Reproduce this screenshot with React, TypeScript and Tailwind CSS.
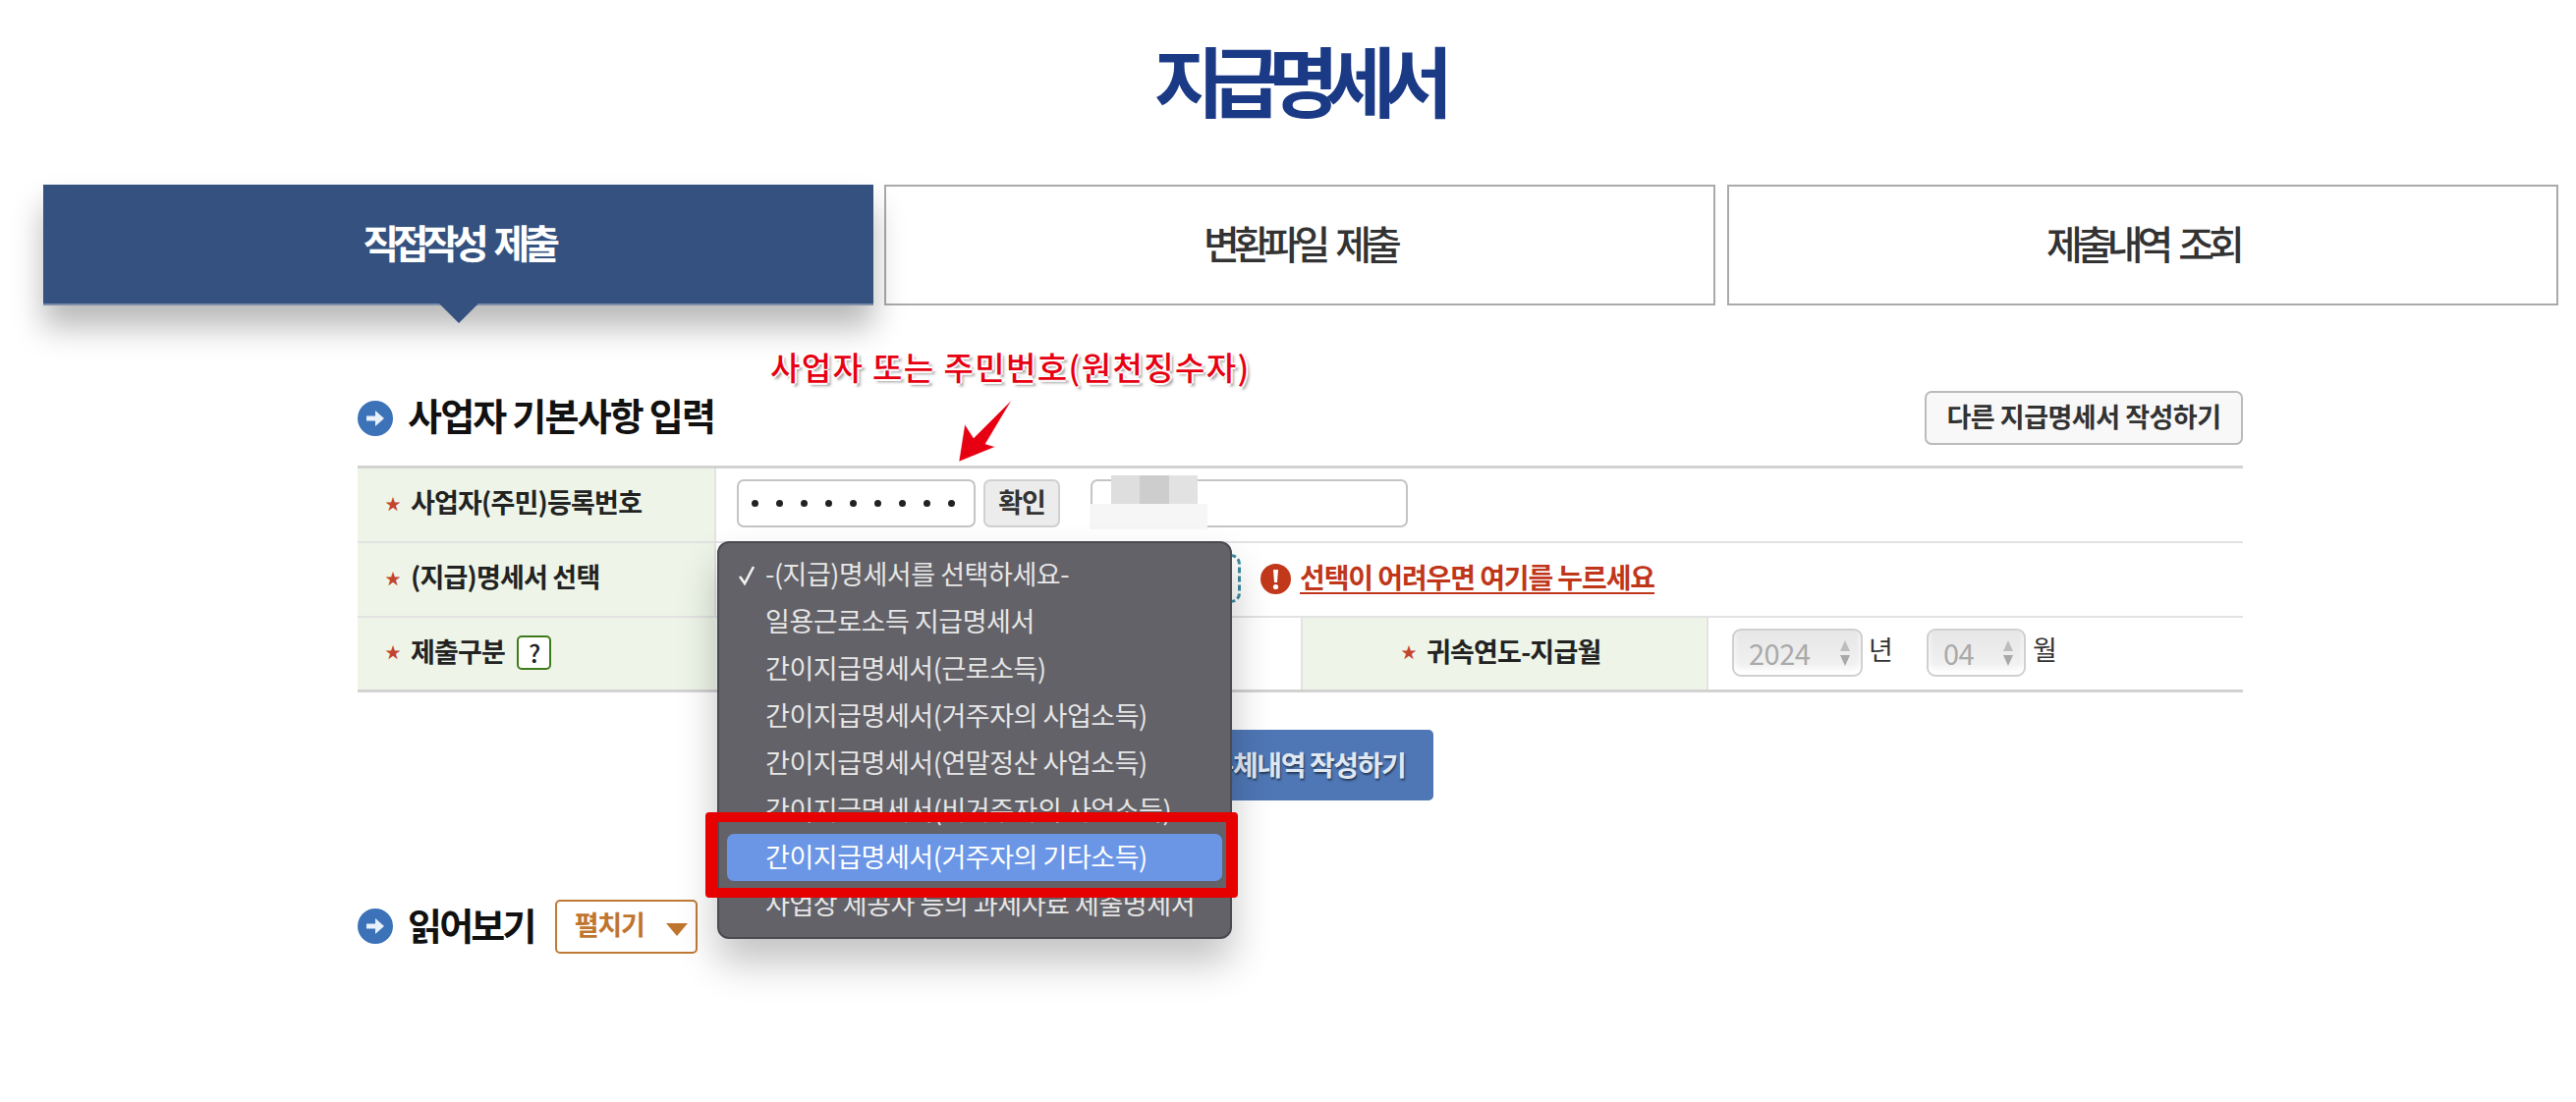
import React from "react";

const FONT = "font-['Noto_Sans_CJK_KR','Noto_Sans',sans-serif]";

function Circle() {
  return (
    <svg width="36" height="36" viewBox="0 0 36 36" className="shrink-0">
      <circle cx="18" cy="18" r="18" fill="#3b72b8" />
      <path d="M9 15.5h9V10l9 8-9 8v-5.5H9z" fill="#e8f0fa" />
    </svg>
  );
}

function Star() {
  return <span className="text-[16px] leading-none text-[#c4452c] w-[16px] shrink-0">★</span>;
}

function Label({ children }: { children: React.ReactNode }) {
  return (
    <div className="flex items-center gap-[10px] pb-[5px] text-[27px] font-bold tracking-[-0.8px] text-[#222] whitespace-nowrap">
      <Star />
      {children}
    </div>
  );
}

function Spin({ value, w }: { value: string; w: string }) {
  return (
    <div className={`${w} h-[49px] rounded-[9px] border-2 border-[#d0d0d0] bg-gradient-to-b from-[#e6e6e6] to-[#f4f4f4] shadow-[inset_0_-6px_6px_#fff] flex items-center justify-between pl-[15px] pr-[10px]`}>
      <span className="text-[29px] text-[#aaa] tracking-[-0.5px] leading-none">{value}</span>
      <svg width="12" height="28" viewBox="0 0 12 28">
        <path d="M6 1l5 11H1z" fill="#bdbdbd" />
        <path d="M1 16h10L6 27z" fill="#a8a8a8" />
      </svg>
    </div>
  );
}

const OPTIONS = [
  "-(지급)명세서를 선택하세요-",
  "일용근로소득 지급명세서",
  "간이지급명세서(근로소득)",
  "간이지급명세서(거주자의 사업소득)",
  "간이지급명세서(연말정산 사업소득)",
  "간이지급명세서(비거주자의 사업소득)",
  "간이지급명세서(거주자의 기타소득)",
  "사업장 제공자 등의 과세자료 제출명세서",
];

function Tab({ children }: { children: React.ReactNode }) {
  return (
    <div className="w-[846px] h-[123px] pb-[6px] border-2 border-[#aaa] bg-white flex items-center justify-center text-[40px] font-medium tracking-[-6px] [word-spacing:8px] text-[#333]">
      {children}
    </div>
  );
}

export default function App() {
  return (
    <div className={`${FONT} relative w-[2622px] h-[1122px] bg-white overflow-hidden`}>
      <div className="h-[188px] flex justify-center pt-[32px] pl-[18px]">
        <h1 className="text-[78px] leading-[96px] font-bold tracking-[-13.6px] text-[#1b3a86]">지급명세서</h1>
      </div>

      <div className="flex gap-[12px] pl-[44px]">
        <div className="relative w-[845px] -mr-px h-[123px] pb-[6px] bg-[#34517f] border-b-[2px] border-[#7f8ea8] shadow-[0_22px_30px_rgba(0,0,0,0.28)] flex items-center justify-center text-[40px] font-bold tracking-[-6.2px] [word-spacing:8px] text-white">
          직접작성 제출
          <svg width="40" height="20" viewBox="0 0 40 20" className="absolute left-[403px] top-[121px]">
            <path d="M0 0h40L20 20z" fill="#34517f" />
          </svg>
        </div>
        <Tab>변환파일 제출</Tab>
        <Tab>제출내역 조회</Tab>
      </div>

      <div className="ml-[364px] w-[1919px] mt-[87px]">
        <div className="h-[55px] flex items-center justify-between">
          <div className="flex items-center gap-[15px]">
            <Circle />
            <h2 className="pb-[7px] text-[38px] font-bold text-[#111] tracking-[-1.8px] leading-none">사업자 기본사항 입력</h2>
          </div>
          <div className="w-[324px] h-[55px] pb-[3px] rounded-[7px] border-2 border-[#bbb] bg-[#f8f8f8] flex items-center justify-center text-[27px] font-bold tracking-[-0.5px] text-[#333]">
            다른 지급명세서 작성하기
          </div>
        </div>

        <div className="mt-[21px] border-t-[3px] border-[#d2d2d2]">
          <div className="flex h-[76px] border-b-[2px] border-[#e2e2e2]">
            <div className="w-[365px] bg-[#eef5e8] border-r-[2px] border-[#e2e2e2] pl-[28px] flex items-center"><Label>사업자(주민)등록번호</Label></div>
            <div className="flex items-center pl-[21px] pb-[3px]">
              <div className="w-[243px] h-[49px] rounded-[7px] border-2 border-[#c4c4c4] bg-white flex items-center pl-[13px] gap-[18px]">
                {Array.from({ length: 9 }).map((_, i) => (
                  <span key={i} className="w-[7px] h-[7px] rounded-full bg-[#222]" />
                ))}
              </div>
              <div className="ml-[8px] w-[78px] h-[49px] pb-[3px] rounded-[7px] border-2 border-[#d0d0d0] bg-[#ececec] flex items-center justify-center text-[27px] font-bold tracking-[-1px] text-[#333]">확인</div>
              <div className="ml-[31px] w-[323px] h-[49px] rounded-[7px] border-2 border-[#c4c4c4] bg-white" />
            </div>
          </div>

          <div className="flex h-[76px] border-b-[2px] border-[#e2e2e2]">
            <div className="w-[365px] bg-[#eef5e8] border-r-[2px] border-[#e2e2e2] pl-[28px] flex items-center"><Label>(지급)명세서 선택</Label></div>
            <div className="flex items-center pl-[10px] pb-[2px]">
              <div className="w-[524px] h-[50px] rounded-[10px] border-[3px] border-dashed border-[#3f8ba0]" />
              <svg width="31" height="31" viewBox="0 0 31 31" className="ml-[20px]">
                <circle cx="15.5" cy="15.5" r="15.5" fill="#c2381a" />
                <path d="M13 6h5l-1 13h-3z" fill="#fff" />
                <circle cx="15.5" cy="23.5" r="2.6" fill="#fff" />
              </svg>
              <a className="ml-[9px] pb-[4px] text-[28px] font-bold tracking-[-1.1px] text-[#c0361a] underline underline-offset-[4px] whitespace-nowrap">선택이 어려우면 여기를 누르세요</a>
            </div>
          </div>

          <div className="flex h-[76px] border-b-[3px] border-[#d2d2d2]">
            <div className="w-[365px] bg-[#eef5e8] pl-[28px] flex items-center">
              <Label>
                <span className="flex items-center gap-[12px]">
                  제출구분
                  <span className="w-[35px] h-[35px] mt-[3px] rounded-[5px] border-2 border-[#3f7a1a] bg-white flex items-center justify-center text-[25px] font-medium leading-none text-[#222]">?</span>
                </span>
              </Label>
            </div>
            <div className="w-[597px] border-r-[2px] border-[#e2e2e2]" />
            <div className="w-[413px] bg-[#eef5e8] border-r-[2px] border-[#e2e2e2] pl-[100px] flex items-center"><Label>귀속연도-지급월</Label></div>
            <div className="flex items-center pl-[24px] pb-[2px] text-[27px] text-[#333]">
              <Spin value="2024" w="w-[133px]" />
              <span className="ml-[6px] w-[59px] -mt-[6px]">년</span>
              <Spin value="04" w="w-[101px]" />
              <span className="ml-[7px] -mt-[6px]">월</span>
            </div>
          </div>
        </div>

        <div className="mt-[38px] flex justify-center">
          <div className="w-[270px] h-[72px] pb-[3px] rounded-[5px] bg-[#4f77b5] flex items-center justify-center pl-[14px] text-[28px] font-bold tracking-[-1.4px] text-[#dfe7f3] [text-shadow:1px_2px_2px_rgba(0,0,0,0.5)] whitespace-nowrap">
            본체내역 작성하기
          </div>
        </div>

        <div className="mt-[101px] h-[54px] flex items-center">
          <Circle />
          <h2 className="ml-[15px] pb-[5px] text-[38px] font-bold text-[#111] tracking-[-2.8px] leading-none">읽어보기</h2>
          <div className="ml-[21px] w-[145px] h-[55px] rounded-[5px] border-2 border-[#c07a35] bg-white flex items-center pl-[18px]">
            <span className="pb-[4px] text-[27px] font-bold tracking-[-1.2px] text-[#c0752f]">펼치기</span>
            <svg width="22" height="13" viewBox="0 0 22 13" className="ml-[22px] mt-[6px]">
              <path d="M0 0h22L11 13z" fill="#c0752f" />
            </svg>
          </div>
        </div>
      </div>

      {/* blurred private value */}
      <div className="absolute left-[1131px] top-[484px] w-[29px] h-[29px] bg-[#dedede]" />
      <div className="absolute left-[1160px] top-[484px] w-[30px] h-[29px] bg-[#cdcdcd]" />
      <div className="absolute left-[1190px] top-[484px] w-[29px] h-[29px] bg-[#e2e2e2]" />
      <div className="absolute left-[1109px] top-[513px] w-[120px] h-[26px] bg-[#f6f6f6]" />

      {/* annotation */}
      <div className="absolute left-[784px] top-[349px] text-[33px] leading-[48px] font-medium tracking-[1.4px] text-[#e60012] whitespace-nowrap [text-shadow:-2px_0_0_#fff,2px_0_0_#fff,0_-2px_0_#fff,0_2px_0_#fff,3px_3px_3px_#999]">
        사업자 또는 주민번호(원천징수자)
      </div>
      <svg width="70" height="76" viewBox="0 0 70 76" className="absolute left-[970px] top-[400px]">
        <path d="M6 70 L12 32 L21 46 L60 7 L33 52 L43 55 Z" fill="#e60012" stroke="#fff" strokeWidth="0.5" />
      </svg>

      {/* open select menu */}
      <div className="absolute left-[730px] top-[551px] w-[524px] h-[405px] rounded-[12px] border-2 border-[#4a4a50] bg-[#636268] shadow-[0_24px_40px_rgba(0,0,0,0.24)]">
        <div className="relative pt-[8px]">
          {OPTIONS.map((o, i) => (
            <div
              key={o}
              className={`relative mx-[8px] h-[48px] pb-[2px] rounded-[7px] flex items-center pl-[39px] text-[27px] tracking-[-0.45px] whitespace-nowrap ${i === 6 ? "bg-[#6b96e6] text-white" : "text-[#e6e6e6]"}`}
            >
              {i === 0 && (
                <svg width="18" height="22" viewBox="0 0 18 22" className="absolute left-[11px] top-[14px]">
                  <path d="M2 12l5 7L16 2" fill="none" stroke="#f0f0f0" strokeWidth="2.6" />
                </svg>
              )}
              {o}
            </div>
          ))}
        </div>
      </div>

      {/* red highlight */}
      <div className="absolute left-[718px] top-[827px] w-[542px] h-[87px] rounded-[4px] border-x-[12px] border-y-[10px] border-[#e60000]" />
    </div>
  );
}
